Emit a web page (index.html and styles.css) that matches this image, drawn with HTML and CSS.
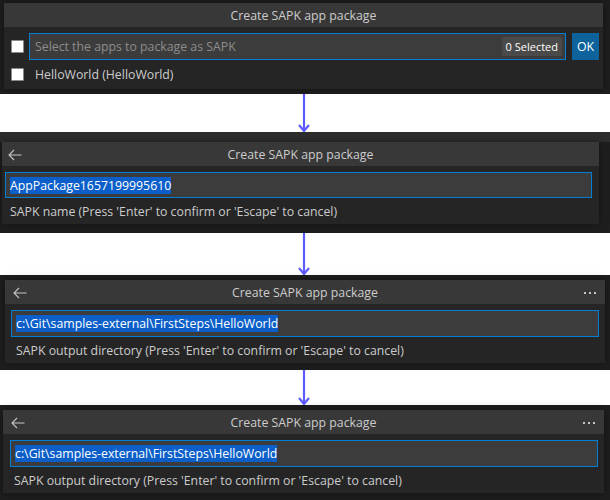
FILE: index.html
```html
<!DOCTYPE html>
<html lang="en">
<head>
<meta charset="utf-8">
<title>Create SAPK app package</title>
<link rel="stylesheet" href="styles.css">
</head>
<body>
<div class="page">
  <section class="panel p1">
    <div class="qi qi1">
      <div class="qi-title"><span></span><span class="qi-title-text">Create SAPK app package</span><span></span></div>
      <div class="qi-row">
        <span class="check"></span>
        <div class="qi-input">
          <span class="placeholder">Select the apps to package as SAPK</span>
          <span class="badge">0 Selected</span>
        </div>
        <button class="ok">OK</button>
      </div>
      <div class="qi-item">
        <span class="check"></span>
        <span class="item-label">HelloWorld (HelloWorld)</span>
      </div>
    </div>
  </section>

  <div class="gap g1"><svg class="arrow" width="12" height="38" viewBox="0 0 12 38"><line x1="6" y1="0" x2="6" y2="37" /><polyline points="1,31 6,37 11,31" /></svg></div>

  <section class="panel p2">
    <div class="strip strip2"></div>
    <div class="qi qi2">
      <div class="qi-title">
        <span class="back"><svg width="14" height="12" viewBox="0 0 14 12"><path d="M13.5 6H1M6 1L1 6l5 5" /></svg></span>
        <span class="qi-title-text">Create SAPK app package</span>
        <span></span>
      </div>
      <div class="qi-field"><span class="sel">AppPackage1657199995610</span></div>
      <div class="qi-desc">SAPK name (Press 'Enter' to confirm or 'Escape' to cancel)</div>
    </div>
  </section>

  <div class="gap g2"><svg class="arrow" width="12" height="42" viewBox="0 0 12 42"><line x1="6" y1="0" x2="6" y2="41" /><polyline points="1,35 6,41 11,35" /></svg></div>

  <section class="panel p3">
    <div class="strip"></div>
    <div class="qi qi3">
      <div class="qi-title">
        <span class="back"><svg width="14" height="12" viewBox="0 0 14 12"><path d="M13.5 6H1M6 1L1 6l5 5" /></svg></span>
        <span class="qi-title-text">Create SAPK app package</span>
        <span class="more"><i></i><i></i><i></i></span>
      </div>
      <div class="qi-field"><span class="sel">c:\Git\samples-external\FirstSteps\HelloWorld</span></div>
      <div class="qi-desc">SAPK output directory (Press 'Enter' to confirm or 'Escape' to cancel)</div>
    </div>
  </section>

  <div class="gap g3"><svg class="arrow" width="12" height="35" viewBox="0 0 12 35"><line x1="6" y1="0" x2="6" y2="34" /><polyline points="1,28 6,34 11,28" /></svg></div>

  <section class="panel p4">
    <div class="strip"></div>
    <div class="qi qi4">
      <div class="qi-title">
        <span class="back"><svg width="14" height="12" viewBox="0 0 14 12"><path d="M13.5 6H1M6 1L1 6l5 5" /></svg></span>
        <span class="qi-title-text">Create SAPK app package</span>
        <span class="more"><i></i><i></i><i></i></span>
      </div>
      <div class="qi-field"><span class="sel">c:\Git\samples-external\FirstSteps\HelloWorld</span></div>
      <div class="qi-desc">SAPK output directory (Press 'Enter' to confirm or 'Escape' to cancel)</div>
    </div>
  </section>
</div>
</body>
</html>
```

FILE: styles.css
```css
* { box-sizing: border-box; }
html, body { margin: 0; padding: 0; background: #ffffff; }
body {
  font-family: "Open Sans", "Noto Sans", "Liberation Sans", sans-serif;
  font-size: 12.3px;
  color: #cccccc;
}
.page { width: 610px; height: 500px; display: flex; flex-direction: column; overflow: hidden; }

.panel { background: #1e1e1e; display: flex; flex-direction: column; flex: none; }
.p1 { height: 94px; padding: 3px 0 0 4px; }
.p2 { height: 101px; }
.p3 { height: 95px; }
.p4 { height: 95px; }

.strip { height: 5px; flex: none; }
.strip2 { height: 10px; background: #2d2d2d; }

.qi { background: #252526; display: flex; flex-direction: column; flex: none; box-shadow: 0 0 8px rgba(0,0,0,0.4); }
.qi1 { width: 599px; height: 86px; }
.qi2 { width: 597px; height: 82px; margin-left: 2px; }
.qi3 { width: 600px; height: 83px; margin-left: 5px; }
.qi4 { width: 601px; height: 83px; margin-left: 3px; }

.qi-title {
  height: 24px; flex: none;
  background: #383838;
  display: grid; grid-template-columns: 30px 1fr 30px;
  align-items: center;
}
.qi-title-text { text-align: center; color: #cccccc; line-height: 24px; padding-top: 1px; }
.back { display: flex; align-items: center; padding-left: 6px; }
.qi3 .back, .qi4 .back { padding-left: 8px; }
.back svg { fill: none; stroke: #c5c5c5; stroke-width: 1.1; }
.more { display: flex; gap: 3px; justify-content: flex-end; padding-right: 9px; }
.more i { width: 2px; height: 2px; background: #c5c5c5; display: block; }

/* panel 1 row */
.qi-row { display: flex; align-items: center; height: 27px; margin-top: 6px; padding-left: 7px; }
.check {
  width: 13px; height: 13px; flex: none;
  background: #ffffff; border: 1px solid #8a8a8a; border-radius: 1px;
}
.qi-input {
  margin-left: 5px; width: 537px; height: 27px;
  background: #3c3c3c; border: 1px solid #007fd4;
  display: flex; align-items: center; justify-content: space-between;
  padding: 0 3px 0 5px;
}
.placeholder { color: #8c8c8c; }
.badge {
  background: #4a4a4a; color: #ffffff; font-size: 11px;
  height: 19px; line-height: 19px; padding: 0 4px; border-radius: 2px;
}
.ok {
  margin-left: 6px; width: 27px; height: 27px;
  background: #0e639c; color: #ffffff; border: 0; padding: 0;
  font-family: inherit; font-size: 12.3px;
}
.qi-item { display: flex; align-items: center; height: 30px; padding-left: 7px; }
.item-label { margin-left: 11px; color: #cccccc; }

/* input fields */
.qi-field {
  height: 27px; flex: none; margin-top: 6px;
  background: #3c3c3c; border: 1px solid #007fd4;
  display: flex; align-items: center; padding-left: 4px;
}
.qi2 .qi-field { height: 26px; margin: 6px 7px 0 3px; }
.qi3 .qi-field { margin: 6px 6px 0 6px; }
.qi4 .qi-field { margin: 6px 6px 0 7px; }
.sel { background: #0c5fc9; color: #ffffff; line-height: 17px; }
.qi-desc { flex: 1; display: flex; align-items: center; padding-left: 8px; color: #cccccc; }
.qi2 .qi-desc { padding-left: 8px; }
.qi3 .qi-desc, .qi4 .qi-desc { padding-left: 11px; }

.gap { background: #ffffff; display: flex; justify-content: center; flex: none; padding-right: 2px; }
.g1 { height: 38px; }
.g2 { height: 42px; }
.g3 { height: 35px; }
.arrow { display: block; fill: none; stroke: #5c5cff; stroke-width: 2.2; }
```
